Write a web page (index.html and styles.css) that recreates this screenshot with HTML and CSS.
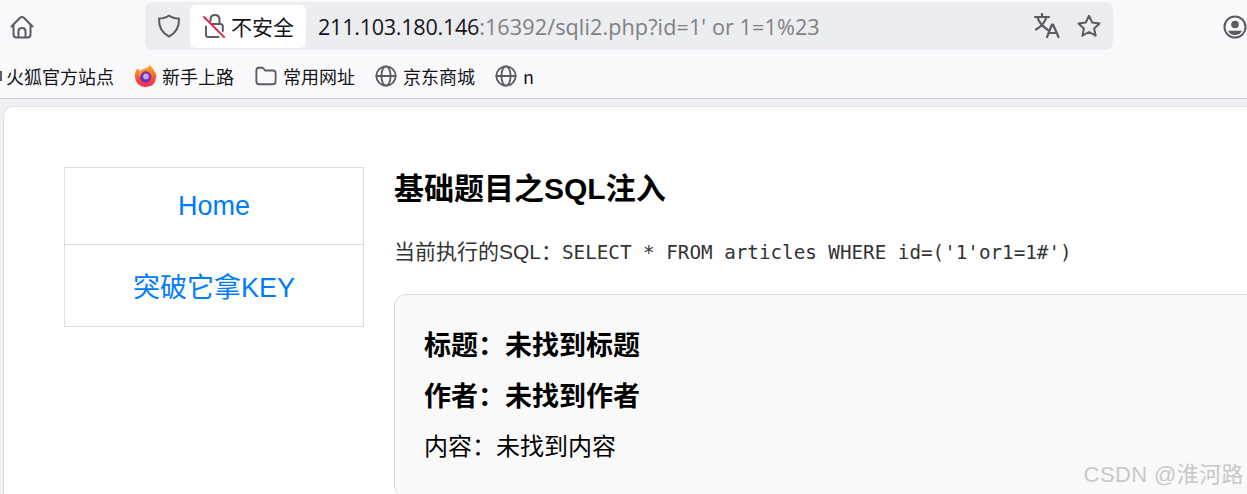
FILE: index.html
```html
<!DOCTYPE html>
<html lang="zh-CN">
<head>
<meta charset="utf-8">
<title>基础题目之SQL注入</title>
<link rel="stylesheet" href="styles.css">
</head>
<body>
<div class="window">
  <header class="chrome">
    <div class="toolbar">
      <svg class="icon home" viewBox="0 0 24 24" width="24" height="24"><path d="M1.500 11.500 L9.800 3 Q12 1 14.200 3 L22.500 11.500 M3.500 10 V19.500 Q3.500 22.500 6.500 22.500 H17.500 Q20.500 22.500 20.500 19.500 V10 M8.500 22.500 V16 Q8.500 13 12 13 Q15.500 13 15.500 16 V22.500"/></svg>
      <div class="urlbar">
        <svg class="icon shield" viewBox="0 0 24 24" width="24" height="24"><path d="M12 1.500 Q16 4.500 22 4.500 Q22.500 17 12 22.500 Q1.500 17 2 4.500 Q8 4.500 12 1.500Z"/></svg>
        <div class="badge">
          <svg class="lock" viewBox="0 0 24 24" width="24" height="24"><path class="lock-body" d="M7.500 7 V5.500 Q7.500 1 12 1 Q16.500 1 16.500 5.500 V10 M9.500 10 H17.500 Q19.800 10 19.800 12.500 V17 M3 12.500 V20.500 Q3 23 5.500 23 H15.500"/><path class="lock-slash" d="M1 3 L21 23"/></svg>
          <span>不安全</span>
        </div>
        <div class="url"><span class="host">211.103.180.146</span><span class="rest">:16392/sqli2.php?id=1' or 1=1%23</span></div>
        <svg class="icon translate" viewBox="0 0 26 26" width="26" height="26"><path d="M1 4 H15 M8 1 V4 M3.500 4 Q5 11 14 17 M12.500 4 Q10 12 2 16.500"/><path d="M13 24 L18 11.500 H19 L24.500 24 M14.800 20 H22.800"/></svg>
        <svg class="icon star" viewBox="0 0 24 24" width="24" height="24"><path d="M12 1.800 L15.200 8.500 L22.500 9.400 L17.100 14.400 L18.600 21.700 L12 18 L5.400 21.700 L6.900 14.400 L1.500 9.400 L8.800 8.500Z"/></svg>
      </div>
      <svg class="icon account" viewBox="0 0 24 24" width="24" height="24"><circle cx="12" cy="12" r="10.500"/><circle class="fill" cx="12" cy="9.500" r="3.800"/><path class="fill" d="M5 15.800 H19 Q17 20 12 20 Q7 20 5 15.800Z"/></svg>
    </div>
    <nav class="bookmarks">
      <span class="cut"></span>
      <span class="mark first">火狐官方站点</span>
      <span class="mark fox">
        <svg viewBox="0 0 24 24" width="23" height="24"><defs><linearGradient id="fx" x1="0" y1="0" x2="0" y2="1"><stop offset="0" stop-color="#ffb01f"/><stop offset="0.55" stop-color="#ff5a2a"/><stop offset="1" stop-color="#f0265c"/></linearGradient></defs><path fill="url(#fx)" d="M1 13 Q1 7 4 4 Q5 7 7 7 Q9 4 13 4 Q16 3 15 0 Q20 3 21 7 Q24 10 23 14 Q22 23 12 23.500 Q2 23 1 13Z"/><circle cx="12" cy="13" r="6" fill="#6b2fc4"/><circle cx="12.500" cy="12.500" r="3" fill="#c9a3f5"/><path fill="#ff9a1f" d="M4 9 Q7 5 12 6 Q7 8 6.500 13 Q5 11 4 9Z"/></svg>
        新手上路
      </span>
      <span class="mark">
        <svg class="icon folder" viewBox="0 0 24 24" width="22" height="22"><path d="M1.500 6 Q1.500 3 4 3 H8.500 L11 6 H19.500 Q22.500 6 22.500 9 V18 Q22.500 21 19.500 21 H4.500 Q1.500 21 1.500 18Z"/></svg>
        常用网址
      </span>
      <span class="mark">
        <svg class="icon globe" viewBox="0 0 24 24" width="22" height="22"><circle cx="12" cy="12" r="10.500"/><ellipse cx="12" cy="12" rx="5" ry="10.500"/><path d="M1.500 12 H22.500"/></svg>
        京东商城
      </span>
      <span class="mark">
        <svg class="icon globe" viewBox="0 0 24 24" width="22" height="22"><circle cx="12" cy="12" r="10.500"/><ellipse cx="12" cy="12" rx="5" ry="10.500"/><path d="M1.500 12 H22.500"/></svg>
        n
      </span>
    </nav>
  </header>
  <main class="page">
    <aside class="sidebar">
      <a class="nav-link home-link" href="#">Home</a>
      <a class="nav-link key-link" href="#">突破它拿KEY</a>
    </aside>
    <section class="content">
      <h1 class="title">基础题目之SQL注入</h1>
      <p class="query">当前执行的SQL：<code>SELECT * FROM articles WHERE id=('1'or1=1#')</code></p>
      <article class="result">
        <h2>标题：未找到标题</h2>
        <h2>作者：未找到作者</h2>
        <p>内容：未找到内容</p>
      </article>
    </section>
  </main>
  <div class="watermark">CSDN @淮河路</div>
</div>
</body>
</html>
```
FILE: styles.css
```css
* { box-sizing: border-box; }
html, body { margin: 0; height: 100%; overflow: hidden; }
body {
  background: #f0f0f4;
  font-family: "Open Sans", "Noto Sans CJK SC", sans-serif;
}
.window { position: relative; width: 1247px; height: 494px; overflow: hidden; display: flex; flex-direction: column; }
.chrome { background: #f9f9fb; border-bottom: 1px solid #cfcfd8; height: 99px; flex: none; }
.icon { fill: none; stroke: #5b5b66; stroke-width: 2; stroke-linejoin: round; stroke-linecap: round; flex: none; }
.icon .fill { fill: #5b5b66; stroke: none; }
.toolbar { height: 54px; display: flex; align-items: flex-start; padding-top: 2px; }
.home { margin: 13px 0 0 10px; }
.urlbar {
  margin-left: 111px; width: 968px; height: 48px; background: #ecedf0; border-radius: 8px;
  display: flex; align-items: center; padding-left: 12px;
}
.badge {
  margin-left: 9px; width: 116px; height: 43px; background: #fff; border-radius: 6px;
  display: flex; align-items: center; padding-left: 13px; gap: 4px;
  font-size: 21px; color: #15141a; font-family: "Noto Sans CJK SC", sans-serif;
}
.lock { flex: none; fill: none; stroke-width: 2; stroke-linecap: round; }
.lock-body { stroke: #5b5b66; }
.lock-slash { stroke: #e22850; }
.url { margin-left: 12px; flex: 1; font-size: 21.600px; color: #7f7f85; white-space: nowrap; }
.host { color: #15141a; letter-spacing: -0.270px; }
.rest { letter-spacing: 0.100px; }
.translate { margin-right: 17px; stroke-width: 2.200; }
.star { margin-right: 12px; }
.account { margin: 13px 0 0 110px; }
.bookmarks {
  height: 44px; display: flex; align-items: center; font-size: 18px; color: #15141a; white-space: nowrap;
  font-family: "Noto Sans CJK SC", sans-serif;
}
.cut { width: 2px; height: 10px; background: #5b5b66; flex: none; }
.mark { display: flex; align-items: center; gap: 6px; margin-left: 20px; }
.mark.first { margin-left: 4px; }
.mark.fox { gap: 5px; padding-right: 1px; }
.page {
  flex: 1; margin: 7px 0 0 3px; background: #fff; border: 1px solid #e0e0e6; border-right: 0; border-bottom: 0;
  border-radius: 10px 0 0 0; display: flex; align-items: flex-start; padding: 60px 0 0 60px; color: #000;
  font-family: "Liberation Sans", "Noto Sans CJK SC", sans-serif;
}
.sidebar { width: 300px; flex: none; border: 1px solid #ddd; display: flex; flex-direction: column; }
.nav-link { color: #007bff; text-decoration: none; font-size: 27px; text-align: center; line-height: 31px; }
.home-link { padding: 23px 0 0; border-bottom: 1px solid #ddd; height: 77px; }
.key-link { padding: 28px 0 0; height: 81px; }
.content { width: 900px; margin-left: 30px; flex: none; }
.title { font-size: 30px; line-height: 34px; margin: 5px 0 0; font-weight: 700; }
.query { font-size: 21px; line-height: 28px; margin: 32px 0 0; color: #333; }
code { font-family: "DejaVu Sans Mono", monospace; font-size: 19.240px; }
.result { margin-top: 27px; background: #f9f9f9; border: 1px solid #ddd; border-radius: 12px; padding: 35px 30px 0 29px; height: 204px; }
.result h2 { font-size: 27px; line-height: 32px; margin: 0 0 19px; font-weight: 700; }
.result p { font-size: 24px; line-height: 32px; margin: -1px 0 0; }
.watermark { position: absolute; right: 3px; top: 456px; font-size: 22px; color: #c8c8c8; font-family: "Liberation Sans", "Noto Sans CJK SC", sans-serif; letter-spacing: 0.400px; }
```
